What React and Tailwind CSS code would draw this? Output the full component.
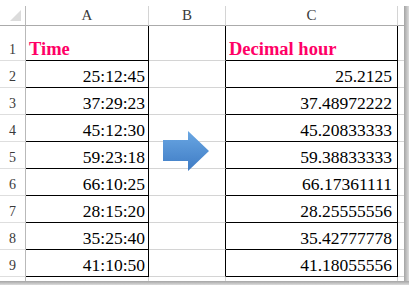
import React from 'react'

const ROWS = [
    ['25:12:45', '25.2125'],
    ['37:29:23', '37.48972222'],
    ['45:12:30', '45.20833333'],
    ['59:23:18', '59.38833333'],
    ['66:10:25', '66.17361111'],
    ['28:15:20', '28.25555556'],
    ['35:25:40', '35.42777778'],
    ['41:10:50', '41.18055556'],
]

function RowNum({ n, tall }) {
    return (
        <div className={`w-[26px] shrink-0 border-r border-b border-r-[#b9b9b9] border-b-[#dedede] flex items-end justify-center pb-[3px] text-[14px] leading-none text-[#3a3a3a] ${tall ? 'h-[35px]' : 'h-[27px]'}`}>
            {n}
        </div>
    )
}

function Arrow() {
    return (
        <svg className="absolute left-[163px] top-[131px]" width="47" height="41" viewBox="0 0 47 41">
            <defs>
                <linearGradient id="arrowFill" x1="0" y1="0" x2="0" y2="1">
                    <stop offset="0" stopColor="#6aa7e3" />
                    <stop offset="1" stopColor="#3e7bc4" />
                </linearGradient>
            </defs>
            <polygon points="0,9 25,9 25,0 46,20 25,40 25,30 0,30" fill="url(#arrowFill)" />
        </svg>
    )
}

export default function App() {
    return (
        <div className="relative w-[409px] h-[285px] bg-white overflow-hidden font-['Liberation_Serif',serif]">
            <div className="h-[6px]" />
            <div className="flex">
                <div className="w-[404px]">
                    {/* column headers */}
                    <div className="flex h-[20px] text-[15px] leading-none text-[#3a3a3a]">
                        <div className="relative w-[26px] border-r border-b border-r-[#b9b9b9] border-b-[#ababab]">
                            <svg className="absolute left-[10px] top-[4px]" width="11" height="11" viewBox="0 0 11 11">
                                <polygon points="11,0 11,11 0,11" fill="#dcdcdc" />
                            </svg>
                        </div>
                        <div className="w-[123px] border-r border-b border-r-[#d4d4d4] border-b-[#ababab] flex items-center justify-center">A</div>
                        <div className="w-[77px] border-r border-b border-r-[#d4d4d4] border-b-[#ababab] flex items-center justify-center">B</div>
                        <div className="w-[172px] border-r border-b border-r-[#d4d4d4] border-b-[#ababab] flex items-center justify-center">C</div>
                        <div className="flex-1 border-b border-b-[#ababab]" />
                    </div>

                    {/* row 1 */}
                    <div className="flex h-[35px]">
                        <RowNum n={1} tall />
                        <div className="w-[123px] border-r border-b border-black flex items-end pl-[3px] pb-[2px] text-[18.5px] leading-none font-bold text-[#ff0066]">Time</div>
                        <div className="w-[77px] border-r border-b border-r-black border-b-[#d4d4d4]" />
                        <div className="w-[172px] border-r border-b border-black flex items-end pl-[3px] pb-[2px] text-[18.5px] leading-none font-bold text-[#ff0066]">Decimal hour</div>
                        <div className="flex-1 border-b border-b-[#d4d4d4]" />
                    </div>

                    {ROWS.map(([time, dec], i) => (
                        <div key={i} className="flex h-[27px] text-[17.5px] leading-none text-black">
                            <RowNum n={i + 2} />
                            <div className="w-[123px] border-r border-b border-black flex items-end justify-end pr-[3px] pb-[2px]">{time}</div>
                            <div className="w-[77px] border-r border-b border-r-black border-b-[#d4d4d4]" />
                            <div className="w-[172px] border-r border-b border-black flex items-end justify-end pr-[5px] pb-[2px]">{dec}</div>
                            <div className="flex-1 border-b border-b-[#d4d4d4]" />
                        </div>
                    ))}

                    {/* partial row 10 */}
                    <div className="flex h-[4px]">
                        <div className="w-[26px] border-r border-r-[#b9b9b9]" />
                        <div className="w-[123px] border-r border-r-[#d4d4d4]" />
                        <div className="w-[77px] border-r border-r-[#d4d4d4]" />
                        <div className="w-[172px] border-r border-r-[#d4d4d4]" />
                        <div className="flex-1" />
                    </div>
                </div>
                <div className="w-[5px] bg-gradient-to-r from-[#a4a4a4] to-[#dcdcdc]" />
            </div>
            <div className="h-[4px] bg-gradient-to-b from-[#a4a4a4] to-[#dcdcdc]" />
            <Arrow />
        </div>
    )
}
